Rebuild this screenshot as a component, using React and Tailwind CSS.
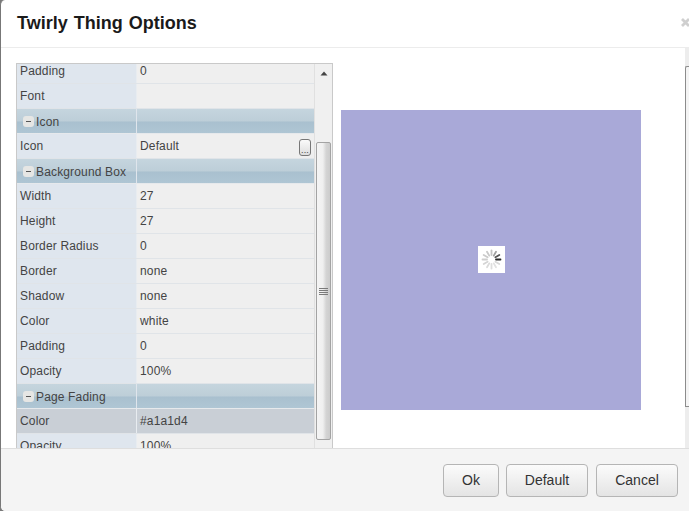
const rows = [
  { k: "Padding", v: "0" },
  { k: "Font", v: "" },
  { k: "Icon", group: true },
  { k: "Icon", v: "Default", more: true },
  { k: "Background Box", group: true },
  { k: "Width", v: "27" },
  { k: "Height", v: "27" },
  { k: "Border Radius", v: "0" },
  { k: "Border", v: "none" },
  { k: "Shadow", v: "none" },
  { k: "Color", v: "white" },
  { k: "Padding", v: "0" },
  { k: "Opacity", v: "100%" },
  { k: "Page Fading", group: true },
  { k: "Color", v: "#a1a1d4", selected: true },
  { k: "Opacity", v: "100%" },
];

function GroupRow({ label }) {
  return (
    <div className="flex h-[25px] shrink-0 border-b border-[#e6e9ec] bg-[linear-gradient(#c5d5de_0,#bdced8_50%,#a9c0cf_54%,#afc6d4_100%)]">
      <div className="flex w-[120px] shrink-0 items-center gap-[2px] border-r border-[#dfe5ec] pl-[6px] pt-[1px]">
        <span className="flex h-[11px] w-[11px] items-center justify-center rounded-[3px] bg-[#e6e6e4]">
          <span className="h-px w-[5px] bg-[#555]" />
        </span>
        <span>{label}</span>
      </div>
      <div className="flex-1" />
    </div>
  );
}

function DataRow({ k, v, more, selected }) {
  return (
    <div className="flex h-[25px] shrink-0 border-b border-[#e0e4e8]">
      <div className={`flex w-[120px] shrink-0 items-center border-r border-[#e8ecf0] pl-[3px] ${selected ? "bg-[#c9cfd6]" : "bg-[#dfe6ee]"}`}>{k}</div>
      <div className={`flex flex-1 items-center justify-between pl-[3px] pr-[3px] ${selected ? "bg-[#c9cfd6]" : "bg-[#efefef]"}`}>
        <span>{v}</span>
        {more && (
          <span className="mt-[2px] flex h-[17px] w-[12px] items-end justify-center rounded-[3px] border border-[#777] bg-[linear-gradient(#fafafa,#dddddd)] text-[9px] leading-[9px]">...</span>
        )}
      </div>
    </div>
  );
}

function Scrollbar() {
  return (
    <div className="flex w-[18px] shrink-0 flex-col items-center border-l border-[#e0e0e0] bg-[#f0f0f0]">
      <svg width="8" height="5" viewBox="0 0 8 5" className="mt-[7px] shrink-0">
        <path d="M4 0.5 L7.5 4.5 L0.5 4.5 Z" fill="#444" />
      </svg>
      <div className="mt-[66px] flex h-[298px] w-[15px] shrink-0 items-center justify-center rounded-[2px] border border-[#a3a3a3] bg-[linear-gradient(90deg,#f4f4f4,#f0f0f0_45%,#d4d4d4_70%,#cccccc)]">
        <svg width="9" height="8" viewBox="0 0 9 8" className="-mt-[1px]">
          <path d="M0 1.5H9M0 3.5H9M0 5.5H9M0 7.5H9" stroke="#7a7a7a" strokeWidth="1" />
        </svg>
      </div>
    </div>
  );
}

function Spinner() {
  const colors = ["#c4c4c4", "#a0a0a0", "#555555", "#2a2a2a", "#d8d8d8", "#e2e2e2", "#dedede", "#dadada", "#d4d4d4", "#cecece", "#cacaca", "#c8c8c8"];
  return (
    <svg width="21" height="21" viewBox="0 0 21 21">
      {colors.map((c, i) => (
        <line key={i} x1="10.5" y1="1.5" x2="10.5" y2="6" stroke={c} strokeWidth="1.8" strokeLinecap="round" transform={`rotate(${i * 30} 10.5 10.5)`} />
      ))}
    </svg>
  );
}

function Btn({ children, w }) {
  return (
    <button className={`h-[33px] ${w} rounded-[4px] border border-[#b5b5b5] bg-[linear-gradient(#fbfbfb,#e4e4e4)] text-[14px] text-[#333]`}>
      {children}
    </button>
  );
}

export default function App() {
  return (
    <div className="h-[511px] w-[689px] overflow-hidden bg-[#7a7a7a] font-['Liberation_Sans',Arial,sans-serif]">
      <div className="flex h-full flex-col overflow-hidden rounded-l-[5px] border-l border-[#777] bg-white">
        <header className="flex h-[48px] shrink-0 items-center justify-between border-b border-[#ececec] pb-[2px] pl-[16px]">
          <h1 className="text-[18px] font-bold leading-[20px] text-[#1a1a1a] [word-spacing:1px]">Twirly Thing Options</h1>
          <svg width="8" height="9" viewBox="0 0 8 9" className="mt-[-1px] shrink-0">
            <path d="M1 1 L8 8 M8 1 L1 8" stroke="#cfcfcf" strokeWidth="2.8" />
          </svg>
        </header>
        <main className="flex min-h-0 flex-1">
          <div className="ml-[15px] mt-[15px] flex w-[317px] shrink-0 overflow-hidden border-x border-t border-[#c9c9c9] text-[12px] tracking-[0.15px] text-[#444]">
            <div className="-mt-[5px] flex min-w-0 flex-1 flex-col">
              {rows.map((r, i) => r.group ? <GroupRow key={i} label={r.k} /> : <DataRow key={i} {...r} />)}
            </div>
            <Scrollbar />
          </div>
          <div className="ml-[8px] mt-[62px] flex h-[300px] w-[300px] shrink-0 items-center justify-center bg-[#a9a9d8] pb-[1px]">
            <div className="flex h-[27px] w-[27px] items-center justify-center bg-white">
              <Spinner />
            </div>
          </div>
          <div className="ml-[44px] w-[4px] shrink-0 bg-[#ededed] pt-[18px]">
            <div className="h-[341px] rounded-tl-[2px] border-l border-t border-b border-[#8c8c8c] bg-[#f4f4f4]" />
          </div>
        </main>
        <footer className="flex h-[63px] shrink-0 items-start justify-end gap-[8px] border-t border-[#dedede] bg-[#f4f4f4] pr-[11px] pt-[15px]">
          <Btn w="w-[56px] -mr-px">Ok</Btn>
          <Btn w="w-[82px]">Default</Btn>
          <Btn w="w-[82px]">Cancel</Btn>
        </footer>
      </div>
    </div>
  );
}
